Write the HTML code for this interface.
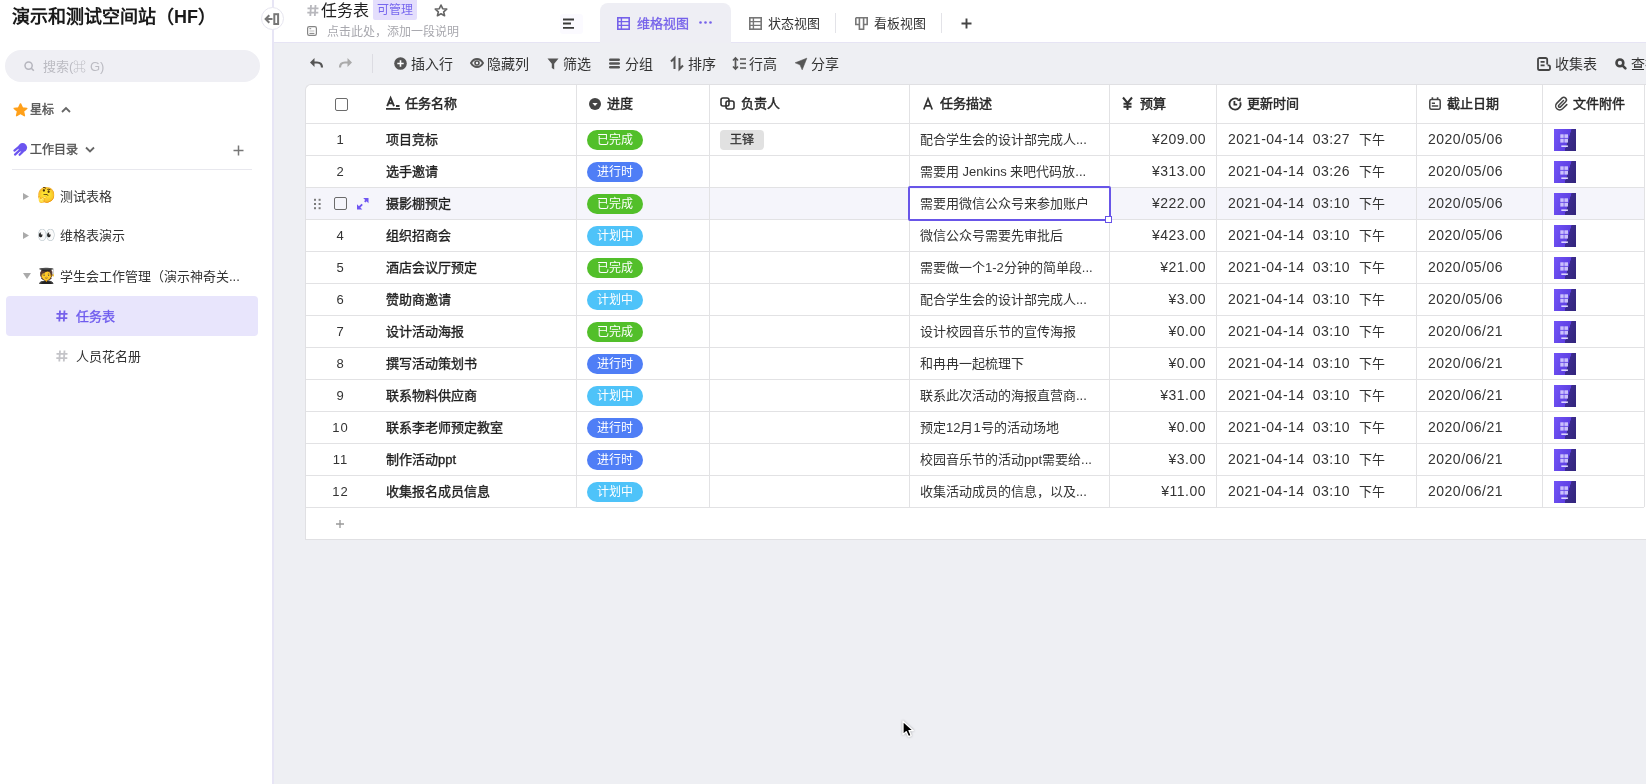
<!DOCTYPE html>
<html lang="zh-CN"><head><meta charset="utf-8"><title>任务表</title><style>
*{box-sizing:border-box;margin:0;padding:0}
html,body{width:1646px;height:784px;overflow:hidden}
body{position:relative;background:#eeeff3;font-family:"Liberation Sans",sans-serif;color:#262626;font-size:13px}
.a{position:absolute;white-space:nowrap}
svg{position:absolute;overflow:visible}
.num{font-size:14px;letter-spacing:0.5px}
</style></head>
<body><div id="root" style="position:absolute;left:0;top:0;width:1646px;height:784px;will-change:transform">
<div class="a" style="left:0;top:0;width:272px;height:784px;background:#fff"></div>
<div class="a" style="left:272px;top:0;width:2px;height:784px;background:#e7e5f5"></div>
<div class="a" style="left:12px;top:5px;font-size:18px;font-weight:bold;color:#1a1a1a;line-height:24px">演示和测试空间站（HF）</div>
<div class="a" style="left:5px;top:50px;width:255px;height:32px;border-radius:16px;background:#efeff4"></div>
<svg style="left:24px;top:61px" width="11" height="11" viewBox="0 0 11 11"><circle cx="4.6" cy="4.6" r="3.6" stroke="#b5b5bd" stroke-width="1.5" fill="none"/><path d="M7.3 7.3 L9.8 9.8" stroke="#b5b5bd" stroke-width="1.6"/></svg>
<div class="a" style="left:43px;top:59px;font-size:13px;color:#bbbbc2;line-height:16px">搜索(⌘ G)</div>
<svg style="left:13px;top:103px" width="15" height="14" viewBox="0 0 24 23"><path d="M12 1.5 L15.1 8 L22.3 8.8 L16.9 13.6 L18.4 20.8 L12 17.1 L5.6 20.8 L7.1 13.6 L1.7 8.8 L8.9 8 Z" fill="#ffa01a" stroke="#ffa01a" stroke-width="2.4" stroke-linejoin="round"/></svg>
<div class="a" style="left:30px;top:102px;font-size:12px;color:#555;line-height:16px;-webkit-text-stroke:0.4px #555">星标</div>
<svg style="left:61px;top:106px" width="10" height="7" viewBox="0 0 10 7"><path d="M1 6 L5 2 L9 6" stroke="#666" stroke-width="1.8" fill="none"/></svg>
<svg style="left:13px;top:143px" width="15" height="14" viewBox="0 0 15 14"><g stroke="#6b55f0" stroke-width="2.2" stroke-linecap="round" fill="none"><path d="M6.5 3.4 L1.4 7.6"/><path d="M6.6 7.4 L2 11.6"/><path d="M9.8 8.6 L6.6 11.8"/></g><circle cx="9.6" cy="4.6" r="4.5" fill="#6b55f0"/></svg>
<div class="a" style="left:30px;top:142px;font-size:12px;color:#555;line-height:16px;-webkit-text-stroke:0.4px #555">工作目录</div>
<svg style="left:85px;top:146px" width="10" height="7" viewBox="0 0 10 7"><path d="M1 1.5 L5 5.5 L9 1.5" stroke="#666" stroke-width="1.8" fill="none"/></svg>
<svg style="left:233px;top:145px" width="11" height="11" viewBox="0 0 11 11"><path d="M5.5 0.5 V10.5 M0.5 5.5 H10.5" stroke="#777" stroke-width="1.5"/></svg>
<div class="a" style="left:12px;top:169px;width:240px;height:1px;background:#e8e8ee"></div>
<svg style="left:23px;top:193px" width="6" height="7" viewBox="0 0 6 7"><path d="M0 0 L6 3.5 L0 7 Z" fill="#aaa"/></svg>
<div class="a" style="left:37px;top:186px;font-size:15px;line-height:18px">🤔</div>
<div class="a" style="left:60px;top:188px;font-size:13px;color:#333;line-height:17px">测试表格</div>
<svg style="left:23px;top:232px" width="6" height="7" viewBox="0 0 6 7"><path d="M0 0 L6 3.5 L0 7 Z" fill="#aaa"/></svg>
<div class="a" style="left:37px;top:226px;font-size:15px;line-height:18px">👀</div>
<div class="a" style="left:60px;top:227px;font-size:13px;color:#333;line-height:17px">维格表演示</div>
<svg style="left:23px;top:273px" width="8" height="6" viewBox="0 0 8 6"><path d="M0 0 L8 0 L4 6 Z" fill="#aaa"/></svg>
<div class="a" style="left:37px;top:267px;font-size:15px;line-height:18px">🧑‍🎓</div>
<div class="a" style="left:60px;top:268px;font-size:13px;color:#333;line-height:17px">学生会工作管理（演示神奇关...</div>
<div class="a" style="left:6px;top:296px;width:252px;height:40px;border-radius:4px;background:#e8e5fc"></div>
<svg style="left:56px;top:310px" width="12" height="12" viewBox="0 0 12 12"><path d="M4 0.5 L3.3 11.5 M8.5 0.5 L7.8 11.5 M0.5 3.8 H11.5 M0.3 8.2 H11.3" stroke="#7561ea" stroke-width="1.8"/></svg>
<div class="a" style="left:76px;top:308px;font-size:13px;color:#6f5cee;line-height:17px;-webkit-text-stroke:0.35px #6f5cee">任务表</div>
<svg style="left:56px;top:350px" width="12" height="12" viewBox="0 0 12 12"><path d="M4 0.5 L3.3 11.5 M8.5 0.5 L7.8 11.5 M0.5 3.8 H11.5 M0.3 8.2 H11.3" stroke="#c4c4c8" stroke-width="1.8"/></svg>
<div class="a" style="left:76px;top:348px;font-size:13px;color:#333;line-height:17px">人员花名册</div>
<div class="a" style="left:274px;top:0;width:1372px;height:42px;background:#fff"></div>
<div class="a" style="left:274px;top:42px;width:1372px;height:1px;background:#e6e4f4"></div>
<svg style="left:307px;top:4px" width="12" height="13" viewBox="0 0 12 12"><path d="M4 0.5 L3.3 11.5 M8.5 0.5 L7.8 11.5 M0.5 3.8 H11.5 M0.3 8.2 H11.3" stroke="#b8b8bd" stroke-width="1.8"/></svg>
<div class="a" style="left:321px;top:1px;font-size:16px;color:#1f1f1f;line-height:20px">任务表</div>
<div class="a" style="left:373px;top:0;width:44px;height:20px;background:#e4defc;color:#7767ee;font-size:12px;line-height:20px;text-align:center;border-radius:0 0 2px 2px">可管理</div>
<svg style="left:434px;top:4px" width="14" height="13" viewBox="0 0 24 23"><path d="M12 1.8 L15 8.3 L22.1 9 L16.7 13.8 L18.3 20.8 L12 17.2 L5.7 20.8 L7.3 13.8 L1.9 9 L9 8.3 Z" fill="none" stroke="#666" stroke-width="2.9" stroke-linejoin="round"/></svg>
<svg style="left:307px;top:26px" width="10" height="10" viewBox="0 0 10 10"><rect x="0.6" y="0.6" width="8.8" height="8.8" rx="1.6" stroke="#858585" stroke-width="1.2" fill="none"/><path d="M2.4 2.7 H4.2 M2.4 7.4 H7.4" stroke="#858585" stroke-width="1"/><path d="M2.4 5 H7.4" stroke="#bbb" stroke-width="1"/></svg>
<div class="a" style="left:327px;top:25px;font-size:12px;color:#a8a8ae;line-height:14px">点击此处，添加一段说明</div>
<div class="a" style="left:261px;top:7px;width:23px;height:23px;border-radius:50%;background:#fff;border:1px solid #e6e5ef"></div>
<svg style="left:264px;top:13px" width="16" height="12" viewBox="0 0 16 12"><path d="M5.3 2.2 L1.6 6 L5.3 9.8 M1.6 6 H8.5" stroke="#777" stroke-width="2" fill="none"/><rect x="10.3" y="1.2" width="3.8" height="9.8" stroke="#777" stroke-width="2" fill="none"/></svg>
<div class="a" style="left:560px;top:14px;width:23px;height:20px;border-radius:3px;background:#fbfaff"></div>
<svg style="left:563px;top:18px" width="12" height="11" viewBox="0 0 12 11"><path d="M0 1.5 H11 M0 5.5 H8 M0 9.8 H11" stroke="#3a3a3a" stroke-width="1.8"/></svg>
<div class="a" style="left:600px;top:3px;width:131px;height:40px;background:#eeeef4;border-radius:8px 8px 0 0"></div>
<svg style="left:617px;top:17px" width="13" height="13" viewBox="0 0 13 13"><rect x="0.8" y="0.8" width="11.4" height="11.4" stroke="#7561ea" stroke-width="1.6" fill="none"/><path d="M0.8 4.6 H12.2 M0.8 8.4 H12.2 M4.4 0.8 V12.2" stroke="#7561ea" stroke-width="1.4"/></svg>
<div class="a" style="left:637px;top:15px;font-size:13px;color:#7561ea;line-height:17px;-webkit-text-stroke:0.3px #7561ea">维格视图</div>
<svg style="left:699px;top:21px" width="13" height="3" viewBox="0 0 13 3"><circle cx="1.5" cy="1.5" r="1.3" fill="#7561ea"/><circle cx="6.5" cy="1.5" r="1.3" fill="#7561ea"/><circle cx="11.5" cy="1.5" r="1.3" fill="#7561ea"/></svg>
<svg style="left:749px;top:17px" width="13" height="13" viewBox="0 0 13 13"><rect x="0.8" y="0.8" width="11.4" height="11.4" stroke="#777" stroke-width="1.6" fill="none"/><path d="M0.8 4.6 H12.2 M0.8 8.4 H12.2 M4.4 0.8 V12.2" stroke="#777" stroke-width="1.4"/></svg>
<div class="a" style="left:768px;top:15px;font-size:13px;color:#333;line-height:17px">状态视图</div>
<div class="a" style="left:835px;top:13px;width:1px;height:20px;background:#e3e3e8"></div>
<svg style="left:855px;top:17px" width="13" height="13" viewBox="0 0 13 13"><path d="M0.8 0.8 H12.2 V7.5 H8.6 M0.8 0.8 V7.5 H4.4 M4.4 0.8 V12.2 H8.6 V0.8" stroke="#777" stroke-width="1.6" fill="none"/></svg>
<div class="a" style="left:874px;top:15px;font-size:13px;color:#333;line-height:17px">看板视图</div>
<div class="a" style="left:941px;top:13px;width:1px;height:20px;background:#e3e3e8"></div>
<svg style="left:961px;top:18px" width="11" height="11" viewBox="0 0 11 11"><path d="M5.5 0.5 V10.5 M0.5 5.5 H10.5" stroke="#444" stroke-width="1.9"/></svg>
<svg style="left:309px;top:57px" width="14" height="12" viewBox="0 0 14 12"><path d="M5.5 1 L1 5.5 L5.5 10 Z" fill="#555"/><path d="M3 5.5 H8 C11 5.5 13 7.5 13 10.5" stroke="#555" stroke-width="2.2" fill="none"/></svg>
<svg style="left:339px;top:57px" width="14" height="12" viewBox="0 0 14 12"><path d="M8.5 1 L13 5.5 L8.5 10 Z" fill="#aaa"/><path d="M11 5.5 H6 C3 5.5 1 7.5 1 10.5" stroke="#aaa" stroke-width="2.2" fill="none"/></svg>
<div class="a" style="left:372px;top:54px;width:1px;height:19px;background:#dcdce2"></div>
<svg style="left:394px;top:57px" width="13" height="13" viewBox="0 0 13 13"><circle cx="6.5" cy="6.5" r="6.3" fill="#555"/><path d="M6.5 3.3 V9.7 M3.3 6.5 H9.7" stroke="#fff" stroke-width="1.6"/></svg>
<div class="a" style="left:411px;top:55px;font-size:14px;color:#333;line-height:18px">插入行</div>
<svg style="left:470px;top:58px" width="14" height="10" viewBox="0 0 14 10"><path d="M1 5 C3 1.5 5 1 7 1 C9 1 11 1.5 13 5 C11 8.5 9 9 7 9 C5 9 3 8.5 1 5 Z" stroke="#555" stroke-width="1.9" fill="none"/><circle cx="7" cy="5" r="2" stroke="#555" stroke-width="1.6" fill="none"/></svg>
<div class="a" style="left:487px;top:55px;font-size:14px;color:#333;line-height:18px">隐藏列</div>
<svg style="left:547px;top:58px" width="12" height="12" viewBox="0 0 12 12"><path d="M0.5 0.5 H11.5 L7.2 5.8 V11.5 L4.8 10 V5.8 Z" fill="#555"/></svg>
<div class="a" style="left:563px;top:55px;font-size:14px;color:#333;line-height:18px">筛选</div>
<svg style="left:609px;top:58px" width="11" height="11" viewBox="0 0 11 11"><rect x="0" y="0.5" width="11" height="2.4" rx="1.2" fill="#555"/><rect x="0" y="4.3" width="11" height="2.4" rx="1.2" fill="#555"/><rect x="0" y="8.1" width="11" height="2.4" rx="1.2" fill="#555"/></svg>
<div class="a" style="left:625px;top:55px;font-size:14px;color:#333;line-height:18px">分组</div>
<svg style="left:670px;top:57px" width="14" height="13" viewBox="0 0 14 13"><path d="M4.5 12 V1 L1 4.5" stroke="#555" stroke-width="2" fill="none"/><path d="M9.5 1 V12 L13 8.5" stroke="#555" stroke-width="2" fill="none"/></svg>
<div class="a" style="left:688px;top:55px;font-size:14px;color:#333;line-height:18px">排序</div>
<svg style="left:732px;top:57px" width="14" height="13" viewBox="0 0 14 13"><path d="M1 3.5 L3.5 1 L6 3.5 M1 9.5 L3.5 12 L6 9.5 M3.5 1 V12" stroke="#555" stroke-width="1.7" fill="none"/><path d="M8 2 H14 M8 6.5 H14 M8 11 H14" stroke="#555" stroke-width="1.7"/></svg>
<div class="a" style="left:749px;top:55px;font-size:14px;color:#333;line-height:18px">行高</div>
<svg style="left:795px;top:58px" width="12" height="12" viewBox="0 0 12 12"><path d="M11.8 0.2 L0.2 4.8 L5 6.8 L7.2 11.8 Z" fill="#555" stroke="#555" stroke-width="0.6" stroke-linejoin="round"/></svg>
<div class="a" style="left:811px;top:55px;font-size:14px;color:#333;line-height:18px">分享</div>
<svg style="left:1537px;top:57px" width="14" height="14" viewBox="0 0 14 14"><path d="M10.2 7.5 V2.6 A1.6 1.6 0 0 0 8.6 1 H2.6 A1.6 1.6 0 0 0 1 2.6 V11.4 A1.6 1.6 0 0 0 2.6 13 H11.6 A1.4 1.4 0 0 0 13 11.6 V9.6 A1.2 1.2 0 0 0 11.8 8.4 H10.6" stroke="#444" stroke-width="1.8" fill="none"/><path d="M3.6 4.8 H7.6 M3.6 8.4 H7.6" stroke="#444" stroke-width="1.7"/></svg>
<div class="a" style="left:1555px;top:55px;font-size:14px;color:#333;line-height:18px">收集表</div>
<svg style="left:1615px;top:58px" width="12" height="12" viewBox="0 0 12 12"><circle cx="4.9" cy="4.9" r="3.4" stroke="#444" stroke-width="2.6" fill="none"/><path d="M7.6 7.6 L10.4 10.4" stroke="#444" stroke-width="2.6" stroke-linecap="round"/></svg>
<div class="a" style="left:1631px;top:55px;font-size:14px;color:#333;line-height:18px">查找</div>
<div class="a" style="left:305px;top:84px;width:1341px;height:456px;background:#fff;border:1px solid #e0e0e3;border-right:none;border-top-left-radius:6px"></div>
<div class="a" style="left:306px;top:188px;width:1338px;height:31px;background:#f5f5fb"></div>
<div class="a" style="left:306px;top:123px;width:1338px;height:1px;background:#e2e2e4"></div>
<div class="a" style="left:306px;top:155px;width:1338px;height:1px;background:#e2e2e4"></div>
<div class="a" style="left:306px;top:187px;width:1338px;height:1px;background:#e2e2e4"></div>
<div class="a" style="left:306px;top:219px;width:1338px;height:1px;background:#e2e2e4"></div>
<div class="a" style="left:306px;top:251px;width:1338px;height:1px;background:#e2e2e4"></div>
<div class="a" style="left:306px;top:283px;width:1338px;height:1px;background:#e2e2e4"></div>
<div class="a" style="left:306px;top:315px;width:1338px;height:1px;background:#e2e2e4"></div>
<div class="a" style="left:306px;top:347px;width:1338px;height:1px;background:#e2e2e4"></div>
<div class="a" style="left:306px;top:379px;width:1338px;height:1px;background:#e2e2e4"></div>
<div class="a" style="left:306px;top:411px;width:1338px;height:1px;background:#e2e2e4"></div>
<div class="a" style="left:306px;top:443px;width:1338px;height:1px;background:#e2e2e4"></div>
<div class="a" style="left:306px;top:475px;width:1338px;height:1px;background:#e2e2e4"></div>
<div class="a" style="left:306px;top:507px;width:1338px;height:1px;background:#e2e2e4"></div>
<div class="a" style="left:576px;top:85px;width:1px;height:422px;background:#e2e2e4"></div>
<div class="a" style="left:709px;top:85px;width:1px;height:422px;background:#e2e2e4"></div>
<div class="a" style="left:909px;top:85px;width:1px;height:422px;background:#e2e2e4"></div>
<div class="a" style="left:1109px;top:85px;width:1px;height:422px;background:#e2e2e4"></div>
<div class="a" style="left:1216px;top:85px;width:1px;height:422px;background:#e2e2e4"></div>
<div class="a" style="left:1416px;top:85px;width:1px;height:422px;background:#e2e2e4"></div>
<div class="a" style="left:1542px;top:85px;width:1px;height:422px;background:#e2e2e4"></div>
<div class="a" style="left:1644px;top:85px;width:1px;height:422px;background:#e2e2e4"></div>
<div class="a" style="left:335px;top:98px;width:13px;height:13px;border:1.5px solid #6b6b6b;border-radius:2px"></div>
<svg style="left:386px;top:97px" width="14" height="14" viewBox="0 0 14 14"><path d="M1.2 9.2 L4.6 1 L8 9.2 M2.6 6.2 H6.6" stroke="#333" stroke-width="1.9" fill="none"/><path d="M0 11.8 H14 M10 9 H13.5" stroke="#333" stroke-width="1.8"/></svg>
<div class="a" style="left:405px;top:95px;font-size:13px;color:#262626;line-height:17px;font-weight:normal;-webkit-text-stroke:0.45px #262626">任务名称</div>
<svg style="left:589px;top:98px" width="12" height="12" viewBox="0 0 12 12"><circle cx="6" cy="6" r="6" fill="#444"/><path d="M3.4 5 H8.6 L6 8 Z" fill="#fff"/></svg>
<div class="a" style="left:607px;top:95px;font-size:13px;color:#262626;line-height:17px;font-weight:normal;-webkit-text-stroke:0.45px #262626">进度</div>
<svg style="left:720px;top:97px" width="15" height="13" viewBox="0 0 15 13"><rect x="1" y="1" width="8" height="8" rx="2" stroke="#333" stroke-width="1.6" fill="none"/><rect x="6" y="4" width="8" height="8" rx="2" stroke="#333" stroke-width="1.6" fill="none"/></svg>
<div class="a" style="left:741px;top:95px;font-size:13px;color:#262626;line-height:17px;font-weight:normal;-webkit-text-stroke:0.45px #262626">负责人</div>
<svg style="left:923px;top:98px" width="10" height="12" viewBox="0 0 10 12"><path d="M0.8 11.5 L5 0.8 L9.2 11.5 M2.3 7.8 H7.7" stroke="#333" stroke-width="1.7" fill="none"/></svg>
<div class="a" style="left:940px;top:95px;font-size:13px;color:#262626;line-height:17px;font-weight:normal;-webkit-text-stroke:0.45px #262626">任务描述</div>
<svg style="left:1122px;top:97px" width="11" height="13" viewBox="0 0 11 13"><path d="M1 0.5 L5.5 6 L10 0.5 M5.5 6 V13 M1.5 6.8 H9.5 M1.5 9.8 H9.5" stroke="#333" stroke-width="2" fill="none"/></svg>
<div class="a" style="left:1140px;top:95px;font-size:13px;color:#262626;line-height:17px;font-weight:normal;-webkit-text-stroke:0.45px #262626">预算</div>
<svg style="left:1228px;top:97px" width="14" height="14" viewBox="0 0 14 14"><path d="M12.3 5.2 A5.6 5.6 0 1 1 10 2.3" stroke="#333" stroke-width="1.9" fill="none"/><path d="M12.9 0.6 L12.6 4.6 L8.8 3.4 Z" fill="#333"/><path d="M6.4 4 V7.6 H9.2" stroke="#333" stroke-width="1.8" fill="none"/></svg>
<div class="a" style="left:1247px;top:95px;font-size:13px;color:#262626;line-height:17px;font-weight:normal;-webkit-text-stroke:0.45px #262626">更新时间</div>
<svg style="left:1429px;top:97px" width="12" height="13" viewBox="0 0 12 13"><rect x="0.8" y="2.4" width="10.4" height="9.8" rx="1.5" stroke="#444" stroke-width="1.5" fill="none"/><path d="M3.4 0.2 V3 M8.6 0.2 V3" stroke="#444" stroke-width="1.6"/><path d="M2.8 6.3 H6 M2.8 9 H9.2" stroke="#444" stroke-width="1.4"/></svg>
<div class="a" style="left:1447px;top:95px;font-size:13px;color:#262626;line-height:17px;font-weight:normal;-webkit-text-stroke:0.45px #262626">截止日期</div>
<svg style="left:1555px;top:97px" width="13" height="13" viewBox="0 0 13 13"><path d="M8.5 3.5 L3.8 8.2 A1.2 1.2 0 0 0 5.5 9.9 L10.6 4.8 A2.6 2.6 0 0 0 6.9 1.1 L1.9 6.1 A4 4 0 0 0 7.6 11.8 L11.8 7.6" stroke="#444" stroke-width="1.5" fill="none" stroke-linecap="round"/></svg>
<div class="a" style="left:1573px;top:95px;font-size:13px;color:#262626;line-height:17px;font-weight:normal;-webkit-text-stroke:0.45px #262626">文件附件</div>
<div class="a" style="left:325px;width:31px;text-align:center;top:131px;font-size:13px;line-height:18px;color:#333;letter-spacing:1px">1</div>
<div class="a" style="left:386px;top:131px;font-size:13px;line-height:18px;color:#1f1f1f;font-weight:normal;-webkit-text-stroke:0.35px #1f1f1f">项目竞标</div>
<div class="a" style="left:587px;top:130px;width:56px;height:20px;border-radius:10px;background:#52bf2a;color:#fff;font-size:12px;line-height:20px;text-align:center">已完成</div>
<div class="a" style="left:720px;top:130px;width:44px;height:20px;border-radius:4px;background:#e1e1e1;color:#333;font-size:12px;line-height:21px;text-align:center;-webkit-text-stroke:0.3px #333">王铎</div>
<div class="a" style="left:920px;top:131px;font-size:13px;line-height:18px;color:#333">配合学生会的设计部完成人...</div>
<div class="a num" style="left:1116px;width:90px;text-align:right;top:130px;line-height:18px;color:#333">¥209.00</div>
<div class="a" style="left:1228px;top:130px;line-height:18px;color:#333"><span class="num">2021-04-14</span><span class="num" style="margin-left:8px">03:27</span><span style="margin-left:9px;font-size:13px">下午</span></div>
<div class="a num" style="left:1428px;top:130px;line-height:18px;color:#333">2020/05/06</div>
<div class="a" style="left:1554px;top:129px;width:22px;height:22px;background:linear-gradient(108deg,#7254f7 0%,#5e40e2 60%,#3b2b8e 61%,#32257a 100%)"></div>
<svg style="left:1554px;top:129px" width="22" height="22" viewBox="0 0 22 22"><g fill="#ddd6ff"><rect x="6.3" y="5.3" width="3.4" height="3.6" opacity="0.85"/><rect x="10.4" y="5.3" width="3.6" height="3.6" opacity="0.85"/><rect x="6.3" y="9.8" width="3.4" height="3.8" opacity="0.85"/><rect x="10.4" y="9.8" width="3.6" height="3.8" opacity="0.85"/><rect x="7.3" y="16.4" width="6.6" height="1.6"/></g></svg>
<div class="a" style="left:325px;width:31px;text-align:center;top:163px;font-size:13px;line-height:18px;color:#333;letter-spacing:1px">2</div>
<div class="a" style="left:386px;top:163px;font-size:13px;line-height:18px;color:#1f1f1f;font-weight:normal;-webkit-text-stroke:0.35px #1f1f1f">选手邀请</div>
<div class="a" style="left:587px;top:162px;width:56px;height:20px;border-radius:10px;background:#4f7ef6;color:#fff;font-size:12px;line-height:20px;text-align:center">进行时</div>
<div class="a" style="left:920px;top:163px;font-size:13px;line-height:18px;color:#333">需要用 Jenkins 来吧代码放...</div>
<div class="a num" style="left:1116px;width:90px;text-align:right;top:162px;line-height:18px;color:#333">¥313.00</div>
<div class="a" style="left:1228px;top:162px;line-height:18px;color:#333"><span class="num">2021-04-14</span><span class="num" style="margin-left:8px">03:26</span><span style="margin-left:9px;font-size:13px">下午</span></div>
<div class="a num" style="left:1428px;top:162px;line-height:18px;color:#333">2020/05/06</div>
<div class="a" style="left:1554px;top:161px;width:22px;height:22px;background:linear-gradient(108deg,#7254f7 0%,#5e40e2 60%,#3b2b8e 61%,#32257a 100%)"></div>
<svg style="left:1554px;top:161px" width="22" height="22" viewBox="0 0 22 22"><g fill="#ddd6ff"><rect x="6.3" y="5.3" width="3.4" height="3.6" opacity="0.85"/><rect x="10.4" y="5.3" width="3.6" height="3.6" opacity="0.85"/><rect x="6.3" y="9.8" width="3.4" height="3.8" opacity="0.85"/><rect x="10.4" y="9.8" width="3.6" height="3.8" opacity="0.85"/><rect x="7.3" y="16.4" width="6.6" height="1.6"/></g></svg>
<svg style="left:314px;top:198px" width="7" height="12" viewBox="0 0 7 12"><g fill="#7a7a7a"><rect x="0" y="0.8" width="2" height="2"/><rect x="4.6" y="0.8" width="2" height="2"/><rect x="0" y="5" width="2" height="2"/><rect x="4.6" y="5" width="2" height="2"/><rect x="0" y="9.2" width="2" height="2"/><rect x="4.6" y="9.2" width="2" height="2"/></g></svg>
<div class="a" style="left:334px;top:197px;width:13px;height:13px;border:1.5px solid #6b6b6b;border-radius:2px"></div>
<svg style="left:357px;top:198px" width="12" height="12" viewBox="0 0 12 12"><g fill="#6f55f2"><path d="M6.2 0 H11.5 V5.3 Z"/><path d="M0 6.2 V11.5 H5.3 Z"/></g><path d="M10 1.5 L1.5 10" stroke="#6f55f2" stroke-width="1.8" stroke-dasharray="3.2 3.6 6" stroke-dashoffset="0"/></svg>
<div class="a" style="left:386px;top:195px;font-size:13px;line-height:18px;color:#1f1f1f;font-weight:normal;-webkit-text-stroke:0.35px #1f1f1f">摄影棚预定</div>
<div class="a" style="left:587px;top:194px;width:56px;height:20px;border-radius:10px;background:#52bf2a;color:#fff;font-size:12px;line-height:20px;text-align:center">已完成</div>
<div class="a" style="left:920px;top:195px;font-size:13px;line-height:18px;color:#333">需要用微信公众号来参加账户</div>
<div class="a num" style="left:1116px;width:90px;text-align:right;top:194px;line-height:18px;color:#333">¥222.00</div>
<div class="a" style="left:1228px;top:194px;line-height:18px;color:#333"><span class="num">2021-04-14</span><span class="num" style="margin-left:8px">03:10</span><span style="margin-left:9px;font-size:13px">下午</span></div>
<div class="a num" style="left:1428px;top:194px;line-height:18px;color:#333">2020/05/06</div>
<div class="a" style="left:1554px;top:193px;width:22px;height:22px;background:linear-gradient(108deg,#7254f7 0%,#5e40e2 60%,#3b2b8e 61%,#32257a 100%)"></div>
<svg style="left:1554px;top:193px" width="22" height="22" viewBox="0 0 22 22"><g fill="#ddd6ff"><rect x="6.3" y="5.3" width="3.4" height="3.6" opacity="0.85"/><rect x="10.4" y="5.3" width="3.6" height="3.6" opacity="0.85"/><rect x="6.3" y="9.8" width="3.4" height="3.8" opacity="0.85"/><rect x="10.4" y="9.8" width="3.6" height="3.8" opacity="0.85"/><rect x="7.3" y="16.4" width="6.6" height="1.6"/></g></svg>
<div class="a" style="left:325px;width:31px;text-align:center;top:227px;font-size:13px;line-height:18px;color:#333;letter-spacing:1px">4</div>
<div class="a" style="left:386px;top:227px;font-size:13px;line-height:18px;color:#1f1f1f;font-weight:normal;-webkit-text-stroke:0.35px #1f1f1f">组织招商会</div>
<div class="a" style="left:587px;top:226px;width:56px;height:20px;border-radius:10px;background:#4ec3f9;color:#fff;font-size:12px;line-height:20px;text-align:center">计划中</div>
<div class="a" style="left:920px;top:227px;font-size:13px;line-height:18px;color:#333">微信公众号需要先审批后</div>
<div class="a num" style="left:1116px;width:90px;text-align:right;top:226px;line-height:18px;color:#333">¥423.00</div>
<div class="a" style="left:1228px;top:226px;line-height:18px;color:#333"><span class="num">2021-04-14</span><span class="num" style="margin-left:8px">03:10</span><span style="margin-left:9px;font-size:13px">下午</span></div>
<div class="a num" style="left:1428px;top:226px;line-height:18px;color:#333">2020/05/06</div>
<div class="a" style="left:1554px;top:225px;width:22px;height:22px;background:linear-gradient(108deg,#7254f7 0%,#5e40e2 60%,#3b2b8e 61%,#32257a 100%)"></div>
<svg style="left:1554px;top:225px" width="22" height="22" viewBox="0 0 22 22"><g fill="#ddd6ff"><rect x="6.3" y="5.3" width="3.4" height="3.6" opacity="0.85"/><rect x="10.4" y="5.3" width="3.6" height="3.6" opacity="0.85"/><rect x="6.3" y="9.8" width="3.4" height="3.8" opacity="0.85"/><rect x="10.4" y="9.8" width="3.6" height="3.8" opacity="0.85"/><rect x="7.3" y="16.4" width="6.6" height="1.6"/></g></svg>
<div class="a" style="left:325px;width:31px;text-align:center;top:259px;font-size:13px;line-height:18px;color:#333;letter-spacing:1px">5</div>
<div class="a" style="left:386px;top:259px;font-size:13px;line-height:18px;color:#1f1f1f;font-weight:normal;-webkit-text-stroke:0.35px #1f1f1f">酒店会议厅预定</div>
<div class="a" style="left:587px;top:258px;width:56px;height:20px;border-radius:10px;background:#52bf2a;color:#fff;font-size:12px;line-height:20px;text-align:center">已完成</div>
<div class="a" style="left:920px;top:259px;font-size:13px;line-height:18px;color:#333">需要做一个1-2分钟的简单段...</div>
<div class="a num" style="left:1116px;width:90px;text-align:right;top:258px;line-height:18px;color:#333">¥21.00</div>
<div class="a" style="left:1228px;top:258px;line-height:18px;color:#333"><span class="num">2021-04-14</span><span class="num" style="margin-left:8px">03:10</span><span style="margin-left:9px;font-size:13px">下午</span></div>
<div class="a num" style="left:1428px;top:258px;line-height:18px;color:#333">2020/05/06</div>
<div class="a" style="left:1554px;top:257px;width:22px;height:22px;background:linear-gradient(108deg,#7254f7 0%,#5e40e2 60%,#3b2b8e 61%,#32257a 100%)"></div>
<svg style="left:1554px;top:257px" width="22" height="22" viewBox="0 0 22 22"><g fill="#ddd6ff"><rect x="6.3" y="5.3" width="3.4" height="3.6" opacity="0.85"/><rect x="10.4" y="5.3" width="3.6" height="3.6" opacity="0.85"/><rect x="6.3" y="9.8" width="3.4" height="3.8" opacity="0.85"/><rect x="10.4" y="9.8" width="3.6" height="3.8" opacity="0.85"/><rect x="7.3" y="16.4" width="6.6" height="1.6"/></g></svg>
<div class="a" style="left:325px;width:31px;text-align:center;top:291px;font-size:13px;line-height:18px;color:#333;letter-spacing:1px">6</div>
<div class="a" style="left:386px;top:291px;font-size:13px;line-height:18px;color:#1f1f1f;font-weight:normal;-webkit-text-stroke:0.35px #1f1f1f">赞助商邀请</div>
<div class="a" style="left:587px;top:290px;width:56px;height:20px;border-radius:10px;background:#4ec3f9;color:#fff;font-size:12px;line-height:20px;text-align:center">计划中</div>
<div class="a" style="left:920px;top:291px;font-size:13px;line-height:18px;color:#333">配合学生会的设计部完成人...</div>
<div class="a num" style="left:1116px;width:90px;text-align:right;top:290px;line-height:18px;color:#333">¥3.00</div>
<div class="a" style="left:1228px;top:290px;line-height:18px;color:#333"><span class="num">2021-04-14</span><span class="num" style="margin-left:8px">03:10</span><span style="margin-left:9px;font-size:13px">下午</span></div>
<div class="a num" style="left:1428px;top:290px;line-height:18px;color:#333">2020/05/06</div>
<div class="a" style="left:1554px;top:289px;width:22px;height:22px;background:linear-gradient(108deg,#7254f7 0%,#5e40e2 60%,#3b2b8e 61%,#32257a 100%)"></div>
<svg style="left:1554px;top:289px" width="22" height="22" viewBox="0 0 22 22"><g fill="#ddd6ff"><rect x="6.3" y="5.3" width="3.4" height="3.6" opacity="0.85"/><rect x="10.4" y="5.3" width="3.6" height="3.6" opacity="0.85"/><rect x="6.3" y="9.8" width="3.4" height="3.8" opacity="0.85"/><rect x="10.4" y="9.8" width="3.6" height="3.8" opacity="0.85"/><rect x="7.3" y="16.4" width="6.6" height="1.6"/></g></svg>
<div class="a" style="left:325px;width:31px;text-align:center;top:323px;font-size:13px;line-height:18px;color:#333;letter-spacing:1px">7</div>
<div class="a" style="left:386px;top:323px;font-size:13px;line-height:18px;color:#1f1f1f;font-weight:normal;-webkit-text-stroke:0.35px #1f1f1f">设计活动海报</div>
<div class="a" style="left:587px;top:322px;width:56px;height:20px;border-radius:10px;background:#52bf2a;color:#fff;font-size:12px;line-height:20px;text-align:center">已完成</div>
<div class="a" style="left:920px;top:323px;font-size:13px;line-height:18px;color:#333">设计校园音乐节的宣传海报</div>
<div class="a num" style="left:1116px;width:90px;text-align:right;top:322px;line-height:18px;color:#333">¥0.00</div>
<div class="a" style="left:1228px;top:322px;line-height:18px;color:#333"><span class="num">2021-04-14</span><span class="num" style="margin-left:8px">03:10</span><span style="margin-left:9px;font-size:13px">下午</span></div>
<div class="a num" style="left:1428px;top:322px;line-height:18px;color:#333">2020/06/21</div>
<div class="a" style="left:1554px;top:321px;width:22px;height:22px;background:linear-gradient(108deg,#7254f7 0%,#5e40e2 60%,#3b2b8e 61%,#32257a 100%)"></div>
<svg style="left:1554px;top:321px" width="22" height="22" viewBox="0 0 22 22"><g fill="#ddd6ff"><rect x="6.3" y="5.3" width="3.4" height="3.6" opacity="0.85"/><rect x="10.4" y="5.3" width="3.6" height="3.6" opacity="0.85"/><rect x="6.3" y="9.8" width="3.4" height="3.8" opacity="0.85"/><rect x="10.4" y="9.8" width="3.6" height="3.8" opacity="0.85"/><rect x="7.3" y="16.4" width="6.6" height="1.6"/></g></svg>
<div class="a" style="left:325px;width:31px;text-align:center;top:355px;font-size:13px;line-height:18px;color:#333;letter-spacing:1px">8</div>
<div class="a" style="left:386px;top:355px;font-size:13px;line-height:18px;color:#1f1f1f;font-weight:normal;-webkit-text-stroke:0.35px #1f1f1f">撰写活动策划书</div>
<div class="a" style="left:587px;top:354px;width:56px;height:20px;border-radius:10px;background:#4f7ef6;color:#fff;font-size:12px;line-height:20px;text-align:center">进行时</div>
<div class="a" style="left:920px;top:355px;font-size:13px;line-height:18px;color:#333">和冉冉一起梳理下</div>
<div class="a num" style="left:1116px;width:90px;text-align:right;top:354px;line-height:18px;color:#333">¥0.00</div>
<div class="a" style="left:1228px;top:354px;line-height:18px;color:#333"><span class="num">2021-04-14</span><span class="num" style="margin-left:8px">03:10</span><span style="margin-left:9px;font-size:13px">下午</span></div>
<div class="a num" style="left:1428px;top:354px;line-height:18px;color:#333">2020/06/21</div>
<div class="a" style="left:1554px;top:353px;width:22px;height:22px;background:linear-gradient(108deg,#7254f7 0%,#5e40e2 60%,#3b2b8e 61%,#32257a 100%)"></div>
<svg style="left:1554px;top:353px" width="22" height="22" viewBox="0 0 22 22"><g fill="#ddd6ff"><rect x="6.3" y="5.3" width="3.4" height="3.6" opacity="0.85"/><rect x="10.4" y="5.3" width="3.6" height="3.6" opacity="0.85"/><rect x="6.3" y="9.8" width="3.4" height="3.8" opacity="0.85"/><rect x="10.4" y="9.8" width="3.6" height="3.8" opacity="0.85"/><rect x="7.3" y="16.4" width="6.6" height="1.6"/></g></svg>
<div class="a" style="left:325px;width:31px;text-align:center;top:387px;font-size:13px;line-height:18px;color:#333;letter-spacing:1px">9</div>
<div class="a" style="left:386px;top:387px;font-size:13px;line-height:18px;color:#1f1f1f;font-weight:normal;-webkit-text-stroke:0.35px #1f1f1f">联系物料供应商</div>
<div class="a" style="left:587px;top:386px;width:56px;height:20px;border-radius:10px;background:#4ec3f9;color:#fff;font-size:12px;line-height:20px;text-align:center">计划中</div>
<div class="a" style="left:920px;top:387px;font-size:13px;line-height:18px;color:#333">联系此次活动的海报直营商...</div>
<div class="a num" style="left:1116px;width:90px;text-align:right;top:386px;line-height:18px;color:#333">¥31.00</div>
<div class="a" style="left:1228px;top:386px;line-height:18px;color:#333"><span class="num">2021-04-14</span><span class="num" style="margin-left:8px">03:10</span><span style="margin-left:9px;font-size:13px">下午</span></div>
<div class="a num" style="left:1428px;top:386px;line-height:18px;color:#333">2020/06/21</div>
<div class="a" style="left:1554px;top:385px;width:22px;height:22px;background:linear-gradient(108deg,#7254f7 0%,#5e40e2 60%,#3b2b8e 61%,#32257a 100%)"></div>
<svg style="left:1554px;top:385px" width="22" height="22" viewBox="0 0 22 22"><g fill="#ddd6ff"><rect x="6.3" y="5.3" width="3.4" height="3.6" opacity="0.85"/><rect x="10.4" y="5.3" width="3.6" height="3.6" opacity="0.85"/><rect x="6.3" y="9.8" width="3.4" height="3.8" opacity="0.85"/><rect x="10.4" y="9.8" width="3.6" height="3.8" opacity="0.85"/><rect x="7.3" y="16.4" width="6.6" height="1.6"/></g></svg>
<div class="a" style="left:325px;width:31px;text-align:center;top:419px;font-size:13px;line-height:18px;color:#333;letter-spacing:1px">10</div>
<div class="a" style="left:386px;top:419px;font-size:13px;line-height:18px;color:#1f1f1f;font-weight:normal;-webkit-text-stroke:0.35px #1f1f1f">联系李老师预定教室</div>
<div class="a" style="left:587px;top:418px;width:56px;height:20px;border-radius:10px;background:#4f7ef6;color:#fff;font-size:12px;line-height:20px;text-align:center">进行时</div>
<div class="a" style="left:920px;top:419px;font-size:13px;line-height:18px;color:#333">预定12月1号的活动场地</div>
<div class="a num" style="left:1116px;width:90px;text-align:right;top:418px;line-height:18px;color:#333">¥0.00</div>
<div class="a" style="left:1228px;top:418px;line-height:18px;color:#333"><span class="num">2021-04-14</span><span class="num" style="margin-left:8px">03:10</span><span style="margin-left:9px;font-size:13px">下午</span></div>
<div class="a num" style="left:1428px;top:418px;line-height:18px;color:#333">2020/06/21</div>
<div class="a" style="left:1554px;top:417px;width:22px;height:22px;background:linear-gradient(108deg,#7254f7 0%,#5e40e2 60%,#3b2b8e 61%,#32257a 100%)"></div>
<svg style="left:1554px;top:417px" width="22" height="22" viewBox="0 0 22 22"><g fill="#ddd6ff"><rect x="6.3" y="5.3" width="3.4" height="3.6" opacity="0.85"/><rect x="10.4" y="5.3" width="3.6" height="3.6" opacity="0.85"/><rect x="6.3" y="9.8" width="3.4" height="3.8" opacity="0.85"/><rect x="10.4" y="9.8" width="3.6" height="3.8" opacity="0.85"/><rect x="7.3" y="16.4" width="6.6" height="1.6"/></g></svg>
<div class="a" style="left:325px;width:31px;text-align:center;top:451px;font-size:13px;line-height:18px;color:#333;letter-spacing:1px">11</div>
<div class="a" style="left:386px;top:451px;font-size:13px;line-height:18px;color:#1f1f1f;font-weight:normal;-webkit-text-stroke:0.35px #1f1f1f">制作活动ppt</div>
<div class="a" style="left:587px;top:450px;width:56px;height:20px;border-radius:10px;background:#4f7ef6;color:#fff;font-size:12px;line-height:20px;text-align:center">进行时</div>
<div class="a" style="left:920px;top:451px;font-size:13px;line-height:18px;color:#333">校园音乐节的活动ppt需要给...</div>
<div class="a num" style="left:1116px;width:90px;text-align:right;top:450px;line-height:18px;color:#333">¥3.00</div>
<div class="a" style="left:1228px;top:450px;line-height:18px;color:#333"><span class="num">2021-04-14</span><span class="num" style="margin-left:8px">03:10</span><span style="margin-left:9px;font-size:13px">下午</span></div>
<div class="a num" style="left:1428px;top:450px;line-height:18px;color:#333">2020/06/21</div>
<div class="a" style="left:1554px;top:449px;width:22px;height:22px;background:linear-gradient(108deg,#7254f7 0%,#5e40e2 60%,#3b2b8e 61%,#32257a 100%)"></div>
<svg style="left:1554px;top:449px" width="22" height="22" viewBox="0 0 22 22"><g fill="#ddd6ff"><rect x="6.3" y="5.3" width="3.4" height="3.6" opacity="0.85"/><rect x="10.4" y="5.3" width="3.6" height="3.6" opacity="0.85"/><rect x="6.3" y="9.8" width="3.4" height="3.8" opacity="0.85"/><rect x="10.4" y="9.8" width="3.6" height="3.8" opacity="0.85"/><rect x="7.3" y="16.4" width="6.6" height="1.6"/></g></svg>
<div class="a" style="left:325px;width:31px;text-align:center;top:483px;font-size:13px;line-height:18px;color:#333;letter-spacing:1px">12</div>
<div class="a" style="left:386px;top:483px;font-size:13px;line-height:18px;color:#1f1f1f;font-weight:normal;-webkit-text-stroke:0.35px #1f1f1f">收集报名成员信息</div>
<div class="a" style="left:587px;top:482px;width:56px;height:20px;border-radius:10px;background:#4ec3f9;color:#fff;font-size:12px;line-height:20px;text-align:center">计划中</div>
<div class="a" style="left:920px;top:483px;font-size:13px;line-height:18px;color:#333">收集活动成员的信息，以及...</div>
<div class="a num" style="left:1116px;width:90px;text-align:right;top:482px;line-height:18px;color:#333">¥11.00</div>
<div class="a" style="left:1228px;top:482px;line-height:18px;color:#333"><span class="num">2021-04-14</span><span class="num" style="margin-left:8px">03:10</span><span style="margin-left:9px;font-size:13px">下午</span></div>
<div class="a num" style="left:1428px;top:482px;line-height:18px;color:#333">2020/06/21</div>
<div class="a" style="left:1554px;top:481px;width:22px;height:22px;background:linear-gradient(108deg,#7254f7 0%,#5e40e2 60%,#3b2b8e 61%,#32257a 100%)"></div>
<svg style="left:1554px;top:481px" width="22" height="22" viewBox="0 0 22 22"><g fill="#ddd6ff"><rect x="6.3" y="5.3" width="3.4" height="3.6" opacity="0.85"/><rect x="10.4" y="5.3" width="3.6" height="3.6" opacity="0.85"/><rect x="6.3" y="9.8" width="3.4" height="3.8" opacity="0.85"/><rect x="10.4" y="9.8" width="3.6" height="3.8" opacity="0.85"/><rect x="7.3" y="16.4" width="6.6" height="1.6"/></g></svg>
<svg style="left:336px;top:520px" width="8" height="8" viewBox="0 0 8 8"><path d="M4 0 V8 M0 4 H8" stroke="#999" stroke-width="1.3"/></svg>
<div class="a" style="left:910px;top:189px;width:199px;height:30px;background:#fff"></div>
<div class="a" style="left:920px;top:195px;font-size:13px;line-height:18px;color:#333">需要用微信公众号来参加账户</div>
<div class="a" style="left:908px;top:186px;width:203px;height:35px;border:2px solid #6855e8;border-radius:2px"></div>
<div class="a" style="left:1105px;top:216px;width:7px;height:7px;border:1px solid #6652e8;background:#fff"></div>
<svg style="left:902px;top:720px;filter:drop-shadow(0 0.6px 0.8px rgba(0,0,0,0.3))" width="13" height="18" viewBox="0 0 13 18"><path d="M1 1.3 L1 14.6 L4.2 11.6 L6.5 16.7 L9.2 15.6 L7 10.6 L11.2 10.6 Z" fill="#000" stroke="#fff" stroke-width="1.3" stroke-linejoin="round"/></svg>
</div></body></html>
